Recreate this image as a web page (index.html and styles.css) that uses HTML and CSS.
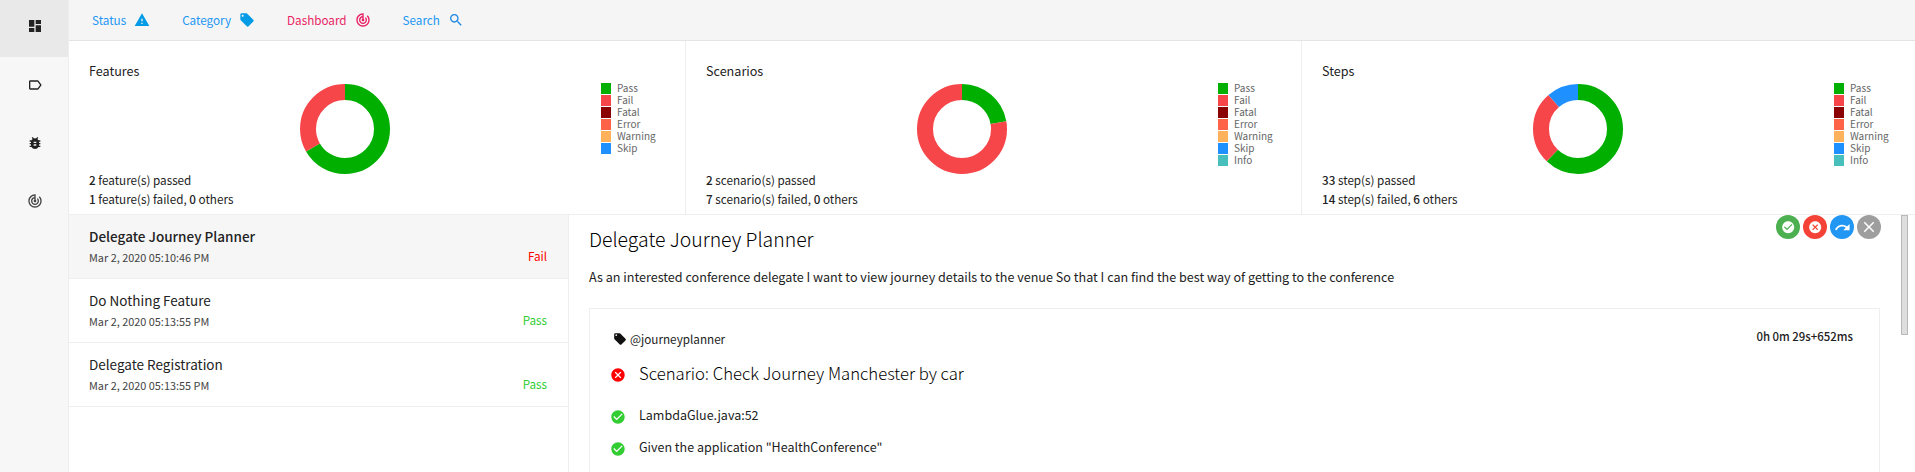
FILE: index.html
```html
<!DOCTYPE html>
<html lang="en">
<head>
<meta charset="utf-8">
<title>Extent Report</title>
<link rel="stylesheet" href="styles.css">
</head>
<body>
<aside class="side">
  <div class="side-item active"><svg class="side-icon" viewBox="0 0 24 24"><path d="M3 13h8V3H3v10zm0 8h8v-6H3v6zm10 0h8V11h-8v10zm0-18v6h8V3h-8z"/></svg></div>
  <div class="side-item"><svg class="side-icon" viewBox="0 0 24 24"><path d="M17.63 5.84C17.27 5.33 16.67 5 16 5L5 5.01C3.9 5.01 3 5.9 3 7v10c0 1.1.9 1.99 2 1.99L16 19c.67 0 1.27-.33 1.63-.84L22 12l-4.37-6.16zM16 17H5V7h11l3.55 5L16 17z"/></svg></div>
  <div class="side-item"><svg class="side-icon" viewBox="0 0 24 24"><path d="M20 8h-2.81c-.45-.78-1.07-1.45-1.82-1.96L17 4.41 15.59 3l-2.17 2.17C12.96 5.06 12.49 5 12 5c-.49 0-.96.06-1.41.17L8.41 3 7 4.41l1.62 1.63C7.88 6.55 7.26 7.22 6.81 8H4v2h2.09c-.05.33-.09.66-.09 1v1H4v2h2v1c0 .34.04.67.09 1H4v2h2.81c1.04 1.79 2.97 3 5.19 3s4.15-1.21 5.19-3H20v-2h-2.09c.05-.33.09-.66.09-1v-1h2v-2h-2v-1c0-.34-.04-.67-.09-1H20V8zm-6 8h-4v-2h4v2zm0-4h-4v-2h4v2z"/></svg></div>
  <div class="side-item"><svg class="side-icon" viewBox="0 0 24 24"><path d="M19.07 4.93l-1.41 1.41C19.1 7.79 20 9.79 20 12c0 4.42-3.58 8-8 8s-8-3.58-8-8c0-4.08 3.05-7.44 7-7.93v2.02C8.16 6.57 6 9.03 6 12c0 3.31 2.69 6 6 6s6-2.69 6-6c0-1.66-.67-3.16-1.76-4.24l-1.41 1.41C15.55 9.9 16 10.9 16 12c0 2.21-1.79 4-4 4s-4-1.79-4-4c0-1.86 1.28-3.41 3-3.86v2.14c-.6.35-1 .98-1 1.72 0 1.1.9 2 2 2s2-.9 2-2c0-.74-.4-1.38-1-1.72V2h-1C6.48 2 2 6.48 2 12s4.48 10 10 10 10-4.48 10-10c0-2.76-1.12-5.26-2.93-7.07z"/></svg></div>
</aside>

<div class="main">
  <nav class="nav">
    <a class="nav-link nav-status">Status<svg class="nav-icon" viewBox="0 0 24 24"><path d="M1 21h22L12 2 1 21zm12-3h-2v-2h2v2zm0-4h-2v-4h2v4z"/></svg></a>
    <a class="nav-link nav-category">Category<svg class="nav-icon" viewBox="0 0 24 24"><path d="M21.41 11.58l-9-9C12.05 2.22 11.55 2 11 2H4c-1.1 0-2 .9-2 2v7c0 .55.22 1.05.59 1.42l9 9c.36.36.86.58 1.41.58.55 0 1.05-.22 1.41-.59l7-7c.37-.36.59-.86.59-1.41 0-.55-.23-1.06-.59-1.42zM5.5 7C4.67 7 4 6.33 4 5.5S4.67 4 5.5 4 7 4.67 7 5.5 6.33 7 5.5 7z"/></svg></a>
    <a class="nav-link nav-dash">Dashboard<svg class="nav-icon" viewBox="0 0 24 24"><path d="M19.07 4.93l-1.41 1.41C19.1 7.79 20 9.79 20 12c0 4.42-3.58 8-8 8s-8-3.58-8-8c0-4.08 3.05-7.44 7-7.93v2.02C8.16 6.57 6 9.03 6 12c0 3.31 2.69 6 6 6s6-2.69 6-6c0-1.66-.67-3.16-1.76-4.24l-1.41 1.41C15.55 9.9 16 10.9 16 12c0 2.21-1.79 4-4 4s-4-1.79-4-4c0-1.86 1.28-3.41 3-3.86v2.14c-.6.35-1 .98-1 1.72 0 1.1.9 2 2 2s2-.9 2-2c0-.74-.4-1.38-1-1.72V2h-1C6.48 2 2 6.48 2 12s4.48 10 10 10 10-4.48 10-10c0-2.76-1.12-5.26-2.93-7.07z"/></svg></a>
    <a class="nav-link nav-search">Search<svg class="nav-icon" viewBox="0 0 24 24"><path d="M15.5 14h-.79l-.28-.27C15.41 12.59 16 11.11 16 9.5 16 5.91 13.09 3 9.5 3S3 5.91 3 9.5 5.91 16 9.5 16c1.61 0 3.09-.59 4.23-1.57l.27.28v.79l5 4.99L20.49 19l-4.99-5zm-6 0C7.01 14 5 11.99 5 9.5S7.01 5 9.5 5 14 7.01 14 9.5 11.99 14 9.5 14z"/></svg></a>
  </nav>

  <section class="cards">
    <div class="card card-a">
      <div class="card-text">
        <div class="card-title">Features</div>
        <div class="card-stats">
          <div><b>2</b> feature(s) passed</div>
          <div><b>1</b> feature(s) failed, <b>0</b> others</div>
        </div>
      </div>
      <svg class="donut" viewBox="0 0 90 90">
        <circle class="ring ring-pass" cx="45" cy="45" r="37" pathLength="360" stroke-dasharray="240 120"/>
        <circle class="ring ring-fail" cx="45" cy="45" r="37" pathLength="360" stroke-dasharray="120 240" stroke-dashoffset="-240"/>
      </svg>
      <ul class="legend">
        <li><i class="sw pass"></i>Pass</li>
        <li><i class="sw fail"></i>Fail</li>
        <li><i class="sw fatal"></i>Fatal</li>
        <li><i class="sw error"></i>Error</li>
        <li><i class="sw warning"></i>Warning</li>
        <li><i class="sw skip"></i>Skip</li>
      </ul>
    </div>
    <div class="card card-b">
      <div class="card-text">
        <div class="card-title">Scenarios</div>
        <div class="card-stats">
          <div><b>2</b> scenario(s) passed</div>
          <div><b>7</b> scenario(s) failed, <b>0</b> others</div>
        </div>
      </div>
      <svg class="donut" viewBox="0 0 90 90">
        <circle class="ring ring-pass" cx="45" cy="45" r="37" pathLength="360" stroke-dasharray="80 280"/>
        <circle class="ring ring-fail" cx="45" cy="45" r="37" pathLength="360" stroke-dasharray="280 80" stroke-dashoffset="-80"/>
      </svg>
      <ul class="legend">
        <li><i class="sw pass"></i>Pass</li>
        <li><i class="sw fail"></i>Fail</li>
        <li><i class="sw fatal"></i>Fatal</li>
        <li><i class="sw error"></i>Error</li>
        <li><i class="sw warning"></i>Warning</li>
        <li><i class="sw skip"></i>Skip</li>
        <li><i class="sw info"></i>Info</li>
      </ul>
    </div>
    <div class="card card-c">
      <div class="card-text">
        <div class="card-title">Steps</div>
        <div class="card-stats">
          <div><b>33</b> step(s) passed</div>
          <div><b>14</b> step(s) failed, <b>6</b> others</div>
        </div>
      </div>
      <svg class="donut" viewBox="0 0 90 90">
        <circle class="ring ring-pass" cx="45" cy="45" r="37" pathLength="360" stroke-dasharray="224 136"/>
        <circle class="ring ring-fail" cx="45" cy="45" r="37" pathLength="360" stroke-dasharray="95 265" stroke-dashoffset="-224"/>
        <circle class="ring ring-skip" cx="45" cy="45" r="37" pathLength="360" stroke-dasharray="41 319" stroke-dashoffset="-319"/>
      </svg>
      <ul class="legend">
        <li><i class="sw pass"></i>Pass</li>
        <li><i class="sw fail"></i>Fail</li>
        <li><i class="sw fatal"></i>Fatal</li>
        <li><i class="sw error"></i>Error</li>
        <li><i class="sw warning"></i>Warning</li>
        <li><i class="sw skip"></i>Skip</li>
        <li><i class="sw info"></i>Info</li>
      </ul>
    </div>
  </section>

  <section class="split">
    <div class="list">
      <div class="item selected">
        <div class="item-name">Delegate Journey Planner</div>
        <div class="item-meta"><span class="item-date">Mar 2, 2020 05:10:46 PM</span><span class="badge badge-fail">Fail</span></div>
      </div>
      <div class="item">
        <div class="item-name">Do Nothing Feature</div>
        <div class="item-meta"><span class="item-date">Mar 2, 2020 05:13:55 PM</span><span class="badge badge-pass">Pass</span></div>
      </div>
      <div class="item">
        <div class="item-name">Delegate Registration</div>
        <div class="item-meta"><span class="item-date">Mar 2, 2020 05:13:55 PM</span><span class="badge badge-pass">Pass</span></div>
      </div>
    </div>

    <div class="detail">
      <h1 class="detail-title">Delegate Journey Planner</h1>
      <p class="detail-desc">As an interested conference delegate I want to view journey details to the venue So that I can find the best way of getting to the conference</p>
      <div class="scenario">
        <div class="scenario-top">
          <div class="tag"><svg class="tag-icon" viewBox="0 0 24 24"><path d="M21.41 11.58l-9-9C12.05 2.22 11.55 2 11 2H4c-1.1 0-2 .9-2 2v7c0 .55.22 1.05.59 1.42l9 9c.36.36.86.58 1.41.58.55 0 1.05-.22 1.41-.59l7-7c.37-.36.59-.86.59-1.41 0-.55-.23-1.06-.59-1.42zM5.5 7C4.67 7 4 6.33 4 5.5S4.67 4 5.5 4 7 4.67 7 5.5 6.33 7 5.5 7z"/></svg>@journeyplanner</div>
          <div class="duration">0h 0m 29s+652ms</div>
        </div>
        <div class="scenario-name"><svg class="st-icon st-fail" viewBox="0 0 24 24"><path d="M12 2C6.47 2 2 6.47 2 12s4.47 10 10 10 10-4.47 10-10S17.53 2 12 2zm5 13.59L15.59 17 12 13.41 8.41 17 7 15.59 10.59 12 7 8.41 8.41 7 12 10.59 15.59 7 17 8.41 13.41 12 17 15.59z"/></svg>Scenario: Check Journey Manchester by car</div>
        <div class="step"><svg class="st-icon st-pass" viewBox="0 0 24 24"><path d="M12 2C6.48 2 2 6.48 2 12s4.48 10 10 10 10-4.48 10-10S17.52 2 12 2zm-2 15l-5-5 1.41-1.41L10 14.17l7.59-7.59L19 8l-9 9z"/></svg>LambdaGlue.java:52</div>
        <div class="step"><svg class="st-icon st-pass" viewBox="0 0 24 24"><path d="M12 2C6.48 2 2 6.48 2 12s4.48 10 10 10 10-4.48 10-10S17.52 2 12 2zm-2 15l-5-5 1.41-1.41L10 14.17l7.59-7.59L19 8l-9 9z"/></svg>Given the application "HealthConference"</div>
      </div>
      <div class="fabs">
        <span class="fab fab-green"><svg class="fab-icon" viewBox="0 0 24 24"><path d="M12 2C6.48 2 2 6.48 2 12s4.48 10 10 10 10-4.48 10-10S17.52 2 12 2zm-2 15l-5-5 1.41-1.41L10 14.17l7.59-7.59L19 8l-9 9z"/></svg></span>
        <span class="fab fab-red"><svg class="fab-icon" viewBox="0 0 24 24"><path d="M12 2C6.47 2 2 6.47 2 12s4.47 10 10 10 10-4.47 10-10S17.53 2 12 2zm5 13.59L15.59 17 12 13.41 8.41 17 7 15.59 10.59 12 7 8.41 8.41 7 12 10.59 15.59 7 17 8.41 13.41 12 17 15.59z"/></svg></span>
        <span class="fab fab-blue"><svg class="fab-icon" viewBox="0 0 24 24"><path d="M18.4 10.6C16.55 8.99 14.15 8 11.5 8c-4.65 0-8.58 3.03-9.96 7.22L3.9 16c1.05-3.19 4.05-5.5 7.6-5.5 1.95 0 3.73.72 5.12 1.88L13 16h9V7l-3.6 3.6z"/></svg></span>
        <span class="fab fab-grey"><svg class="fab-icon" viewBox="0 0 24 24"><path d="M19 6.41L17.59 5 12 10.59 6.41 5 5 6.41 10.59 12 5 17.59 6.41 19 12 13.41 17.59 19 19 17.59 13.41 12z"/></svg></span>
      </div>
      <div class="scrollbar"></div>
    </div>
  </section>
</div>
</body>
</html>
```

FILE: styles.css
```css
* { box-sizing: border-box; }
html, body { height: 100%; margin: 0; overflow: hidden; }
body {
  display: flex;
  font-family: "Noto Sans CJK SC", "Noto Sans", sans-serif;
  font-size: 12.6px;
  line-height: 20px;
  color: #222;
  background: #fff;
}
.side { width: 69px; flex: none; background: #f7f7f7; border-right: 1px solid #eee; }
.side-item { height: 58px; padding: 0 0 5px 2px; display: flex; align-items: center; justify-content: center; }
.side-item.active { height: 57px; margin-bottom: 1px; background: #e9e9e9; }
.side-icon { width: 16px; height: 16px; fill: #222; }
.side-item:nth-child(4) .side-icon { fill: #444; }

.main { flex: 1; min-width: 0; display: flex; flex-direction: column; }
.nav { height: 41px; flex: none; display: flex; align-items: center; gap: 32px; padding: 0 0 1px 23px; background: #f5f5f5; border-bottom: 1px solid #e4e4e4; }
.nav-link { display: flex; align-items: center; gap: 8px; font-size: 11.7px; color: #2196f3; }
.nav-dash { color: #e91e63; }
.nav-icon { width: 16px; height: 16px; fill: #039be5; }
.nav-dash .nav-icon { fill: #e91e63; }
.nav-search .nav-icon { fill: #1e88e5; }

.cards { height: 174px; flex: none; display: flex; border-bottom: 1px solid #eee; }
.card { display: grid; grid-template-columns: 211px 90px 1fr; padding-left: 20px; border-right: 1px solid #eee; }
.card-a { width: 617px; }
.card-b { width: 616px; }
.card-c { flex: 1; border-right: 0; }
.card-text { display: flex; flex-direction: column; justify-content: space-between; padding: 20px 0 6px; }
.card-title { font-size: 12.6px; line-height: 20px; }
.card-stats { font-size: 11.7px; line-height: 19px; white-space: nowrap; }
.card-stats b { font-weight: 500; }
.donut { width: 90px; height: 90px; margin-top: 43px; transform: rotate(-90deg); }
.ring { fill: none; stroke-width: 16; }
.ring-pass { stroke: #00af00; }
.ring-fail { stroke: #f7464a; }
.ring-skip { stroke: #1e90ff; }
.legend { list-style: none; margin: 42px 0 0 211px; padding: 0; font-size: 10px; color: #666; }
.legend li { height: 12px; line-height: 9px; display: flex; align-items: flex-start; gap: 6px; white-space: nowrap; }
.sw { width: 10px; height: 11px; flex: none; }
.pass { background: #00af00; }
.fail { background: #f7464a; }
.fatal { background: #8b0000; }
.error { background: #ff6347; }
.warning { background: #ffb25b; }
.skip { background: #1e90ff; }
.info { background: #46bfbd; }

.split { flex: 1; min-height: 0; display: flex; }
.list { width: 500px; flex: none; border-right: 1px solid #eee; }
.item { height: 64px; padding: 11px 21px 0 20px; border-bottom: 1px solid #eee; }
.item.selected { background: #f6f6f6; }
.item-name { font-size: 13.5px; line-height: 20px; color: #222; }
.selected .item-name { font-weight: 500; }
.item-meta { display: flex; justify-content: space-between; align-items: center; margin-top: 1px; height: 20px; }
.item-date { font-size: 10.9px; color: #444; }
.badge { font-size: 11.7px; position: relative; top: -1px; }
.badge-fail { color: #f00; }
.badge-pass { color: #32cd32; }

.detail { flex: 1; position: relative; padding: 9px 35px 0 20px; min-width: 0; }
.detail-title { margin: 0; font-size: 19.4px; line-height: 30px; font-weight: 300; color: #000; }
.detail-desc { margin: 13px 0 0; font-size: 12.6px; line-height: 20px; }
.scenario { margin-top: 21px; height: 300px; border: 1px solid #eee; padding: 18px 26px 0 20px; }
.scenario-top { display: flex; justify-content: space-between; height: 20px; }
.tag { display: flex; align-items: center; gap: 3px; font-size: 11.7px; margin-top: 3px; margin-left: 3px; }
.tag-icon { width: 14px; height: 14px; fill: #111; }
.duration { font-size: 11.4px; font-weight: 500; margin-top: -1px; }
.scenario-name { display: flex; align-items: center; margin-top: 13px; height: 26px; font-size: 16.7px; line-height: 26px; font-weight: 300; color: #000; }
.st-icon { width: 16px; height: 16px; flex: none; margin-right: 13px; position: relative; top: 2px; }
.st-fail { fill: #f00; }
.st-pass { fill: #32cd32; }
.step { display: flex; align-items: center; height: 20px; margin-top: 12px; font-size: 12.5px; }
.scenario-name + .step { margin-top: 19px; }

.fabs { position: absolute; top: 0; left: 1207px; display: flex; gap: 3px; }
.fab { width: 24px; height: 24px; border-radius: 50%; display: flex; align-items: center; justify-content: center; }
.fab-icon { width: 14.4px; height: 14.4px; fill: #fff; }
.fab-blue .fab-icon { width: 17px; height: 17px; }
.fab-grey .fab-icon { width: 18px; height: 18px; }
.fab-green { background: #4caf50; }
.fab-red { background: #f44336; }
.fab-blue { background: #2196f3; }
.fab-grey { background: #9e9e9e; }
.scrollbar { position: absolute; top: 0; left: 1332px; width: 7px; height: 120px; background: #dedede; border: 1px solid #b9b9b9; }
```
